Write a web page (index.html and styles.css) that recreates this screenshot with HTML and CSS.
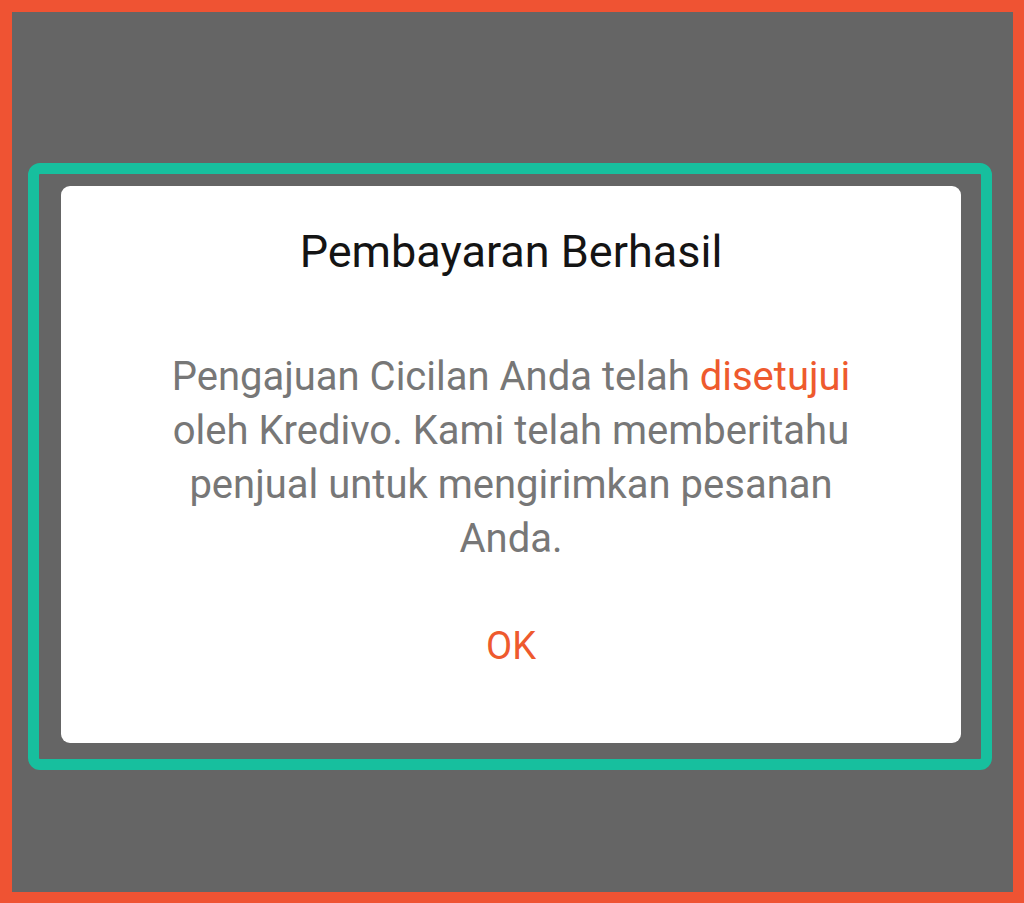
FILE: index.html
```html
<!DOCTYPE html>
<html>
<head>
<meta charset="utf-8">
<link rel="stylesheet" href="styles.css">
</head>
<body>
<div class="frame">
  <div class="highlight">
    <div class="dialog">
      <h1 class="title">Pembayaran Berhasil</h1>
      <p class="message">Pengajuan Cicilan Anda telah <span class="accent">disetujui</span><br>oleh Kredivo. Kami telah memberitahu<br>penjual untuk mengirimkan pesanan<br>Anda.</p>
      <div class="actions"><span class="ok">OK</span></div>
    </div>
  </div>
</div>
</body>
</html>
```

FILE: styles.css
```css
html, body {
  margin: 0;
  padding: 0;
}
body {
  width: 1024px;
  height: 903px;
  font-family: Roboto, "Noto Sans", sans-serif;
}
.frame {
  box-sizing: border-box;
  width: 1024px;
  height: 903px;
  border-style: solid;
  border-color: #ef5333;
  border-width: 12px 11px 11px 12px;
  background: #656565;
  padding: 151px 21px 0 16px;
}
.highlight {
  box-sizing: border-box;
  width: 964px;
  border: 11px solid #17bf9e;
  border-radius: 12px;
  padding: 12px 18px 16px 22px;
}
.dialog {
  box-sizing: border-box;
  width: 900px;
  height: 557px;
  background: #ffffff;
  border-radius: 9px;
  padding-top: 39px;
  text-align: center;
}
.title {
  margin: 0;
  font-size: 45px;
  line-height: 54px;
  font-weight: 400;
  color: #141414;
}
.message {
  margin: 71px 0 0;
  font-size: 40px;
  line-height: 54px;
  color: #777777;
}
.accent {
  color: #ee5a2e;
}
.actions {
  margin-top: 53px;
  line-height: 54px;
}
.ok {
  font-size: 38px;
  color: #ee5a2e;
}
```
